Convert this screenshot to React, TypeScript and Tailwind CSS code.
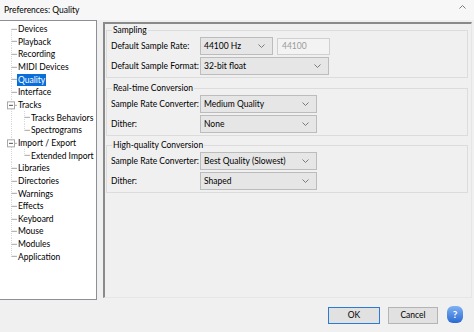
import React from 'react';

type TreeItem = {
  label: string;
  level: 0 | 1;
  expander?: boolean;
  lastChild?: boolean;
  selected?: boolean;
};

const items: TreeItem[] = [
  { label: 'Devices', level: 0 },
  { label: 'Playback', level: 0 },
  { label: 'Recording', level: 0 },
  { label: 'MIDI Devices', level: 0 },
  { label: 'Quality', level: 0, selected: true },
  { label: 'Interface', level: 0 },
  { label: 'Tracks', level: 0, expander: true },
  { label: 'Tracks Behaviors', level: 1 },
  { label: 'Spectrograms', level: 1, lastChild: true },
  { label: 'Import / Export', level: 0, expander: true },
  { label: 'Extended Import', level: 1, lastChild: true },
  { label: 'Libraries', level: 0 },
  { label: 'Directories', level: 0 },
  { label: 'Warnings', level: 0 },
  { label: 'Effects', level: 0 },
  { label: 'Keyboard', level: 0 },
  { label: 'Mouse', level: 0 },
  { label: 'Modules', level: 0 },
  { label: 'Application', level: 0 },
];

const ROW = 12.67;
const MID = ROW / 2;

function Connector({ item, first, last }: { item: TreeItem; first: boolean; last: boolean }) {
  const w = item.level === 0 ? 17 : 30;
  return (
    <svg width={w} height={ROW} viewBox={`0 0 ${w} ${ROW}`} className="shrink-0">
      {/* root level vertical line */}
      <line x1="11.5" x2="11.5" y1={first ? MID : 0} y2={last && item.level === 0 ? MID : ROW} stroke="#d6d6d6" strokeDasharray="1 1" />
      {item.level === 0 && !item.expander && (
        <line x1="11.5" x2="17" y1={MID} y2={MID} stroke="#a8a8a8" />
      )}
      {item.expander && (
        <>
          <line x1="14.5" x2="17" y1={MID} y2={MID} stroke="#a8a8a8" />
          <rect x="7.5" y={MID - 3.5} width="7" height="7" fill="#fff" stroke="#a8a8a8" />
          <line x1="9" x2="13" y1={MID} y2={MID} stroke="#505050" />
        </>
      )}
      {item.level === 1 && (
        <>
          <line x1="24.5" x2="24.5" y1="0" y2={item.lastChild ? MID : ROW} stroke="#d6d6d6" strokeDasharray="1 1" />
          <line x1="24.5" x2="30" y1={MID} y2={MID} stroke="#a8a8a8" />
        </>
      )}
    </svg>
  );
}

function Chevron() {
  return (
    <svg width="7" height="4" viewBox="0 0 7 4" className="shrink-0">
      <polyline points="0.5,0.5 3.5,3.5 6.5,0.5" fill="none" stroke="#7a7a7a" />
    </svg>
  );
}

function Select({ value, width }: { value: string; width: string }) {
  return (
    <div className={`flex items-center justify-between h-[18px] border border-[#bcbcbc] bg-[#e6e6e6] pl-[3px] pr-[7px] ${width}`}>
      <span>{value}</span>
      <Chevron />
    </div>
  );
}

function Row({ label, children }: { label: string; children: React.ReactNode }) {
  return (
    <div className="flex items-center h-[18px]">
      <span className="w-[89px] shrink-0">{label}</span>
      {children}
    </div>
  );
}

function Group({ title, children, className = '' }: { title: string; children: React.ReactNode; className?: string }) {
  return (
    <fieldset className={`border border-[#dcdcdc] pl-[4px] pb-[2px] ${className}`}>
      <legend className="ml-[1px] px-[1px] leading-[11px]">{title}</legend>
      <div className="flex flex-col gap-[2px] pt-[1px]">{children}</div>
    </fieldset>
  );
}

export default function App() {
  return (
    <div className="w-[474px] h-[332px] bg-[#f0f0f0] flex flex-col overflow-hidden text-[8.5px] text-black font-['Lato','Noto_Sans',sans-serif]">
      {/* title bar */}
      <div className="h-[20px] shrink-0 bg-[#f7f7f7] flex items-center justify-between pl-[4px] pr-[8px]">
        <span>Preferences: Quality</span>
        <svg width="7" height="4" viewBox="0 0 7 4" className="-mt-[6px]">
          <polyline points="0.5,3.5 3.5,0.5 6.5,3.5" fill="none" stroke="#7a7a7a" />
        </svg>
      </div>

      <div className="flex h-[280px] shrink-0">
        {/* category tree */}
        <div className="w-[97px] h-full border border-l-0 border-[#8c8f96] bg-white pt-[1.67px]">
          {items.map((item, i) => (
            <div key={item.label} className="flex items-center h-[12.67px] whitespace-nowrap">
              <Connector item={item} first={i === 0} last={i === items.length - 1} />
              <span className={`px-[1px] leading-[12px] ${item.selected ? 'bg-[#0a6ed8] text-white' : ''}`}>
                {item.label}
              </span>
            </div>
          ))}
        </div>

        {/* settings page */}
        <div className="ml-[6px] mt-[2px] w-[369px] h-[276px] border-l-2 border-t-2 border-[#8a8a8a] border-r border-b border-r-[#e6e6e6] border-b-[#e6e6e6] pl-[1px] pr-[3px] pt-[1px] flex flex-col">
          <Group title="Sampling">
            <Row label="Default Sample Rate:">
              <Select value="44100 Hz" width="w-[73px]" />
              <div className="ml-[4px] w-[53px] h-[17px] border border-[#d0d0d0] bg-[#f3f3f3] pl-[4px] flex items-center text-[#9a9a9a]">
                44100
              </div>
            </Row>
            <Row label="Default Sample Format:">
              <Select value="32-bit float" width="w-[129px]" />
            </Row>
          </Group>

          <Group title="Real-time Conversion" className="mt-[5px]">
            <Row label="Sample Rate Converter:">
              <Select value="Medium Quality" width="w-[117px]" />
            </Row>
            <Row label="Dither:">
              <Select value="None" width="w-[117px]" />
            </Row>
          </Group>

          <Group title="High-quality Conversion" className="mt-[4px]">
            <Row label="Sample Rate Converter:">
              <Select value="Best Quality (Slowest)" width="w-[117px]" />
            </Row>
            <Row label="Dither:">
              <Select value="Shaped" width="w-[117px]" />
            </Row>
          </Group>
        </div>
      </div>

      {/* dialog buttons */}
      <div className="flex justify-end items-start pt-[7px] pr-[11px]">
        <button className="w-[52px] h-[17px] border border-[#2a7ad6] bg-[#e1e1e1] flex items-center justify-center">
          OK
        </button>
        <button className="ml-[8px] w-[50px] h-[17px] border border-[#b4b4b4] bg-[#e1e1e1] flex items-center justify-center">
          Cancel
        </button>
        <div className="ml-[9px] -mt-[1px] w-[16px] h-[17px] rounded-[6px] bg-linear-to-b from-[#7fb2f2] to-[#2a68d2] flex items-center justify-center text-white font-bold text-[10px]">
          ?
        </div>
      </div>
    </div>
  );
}
